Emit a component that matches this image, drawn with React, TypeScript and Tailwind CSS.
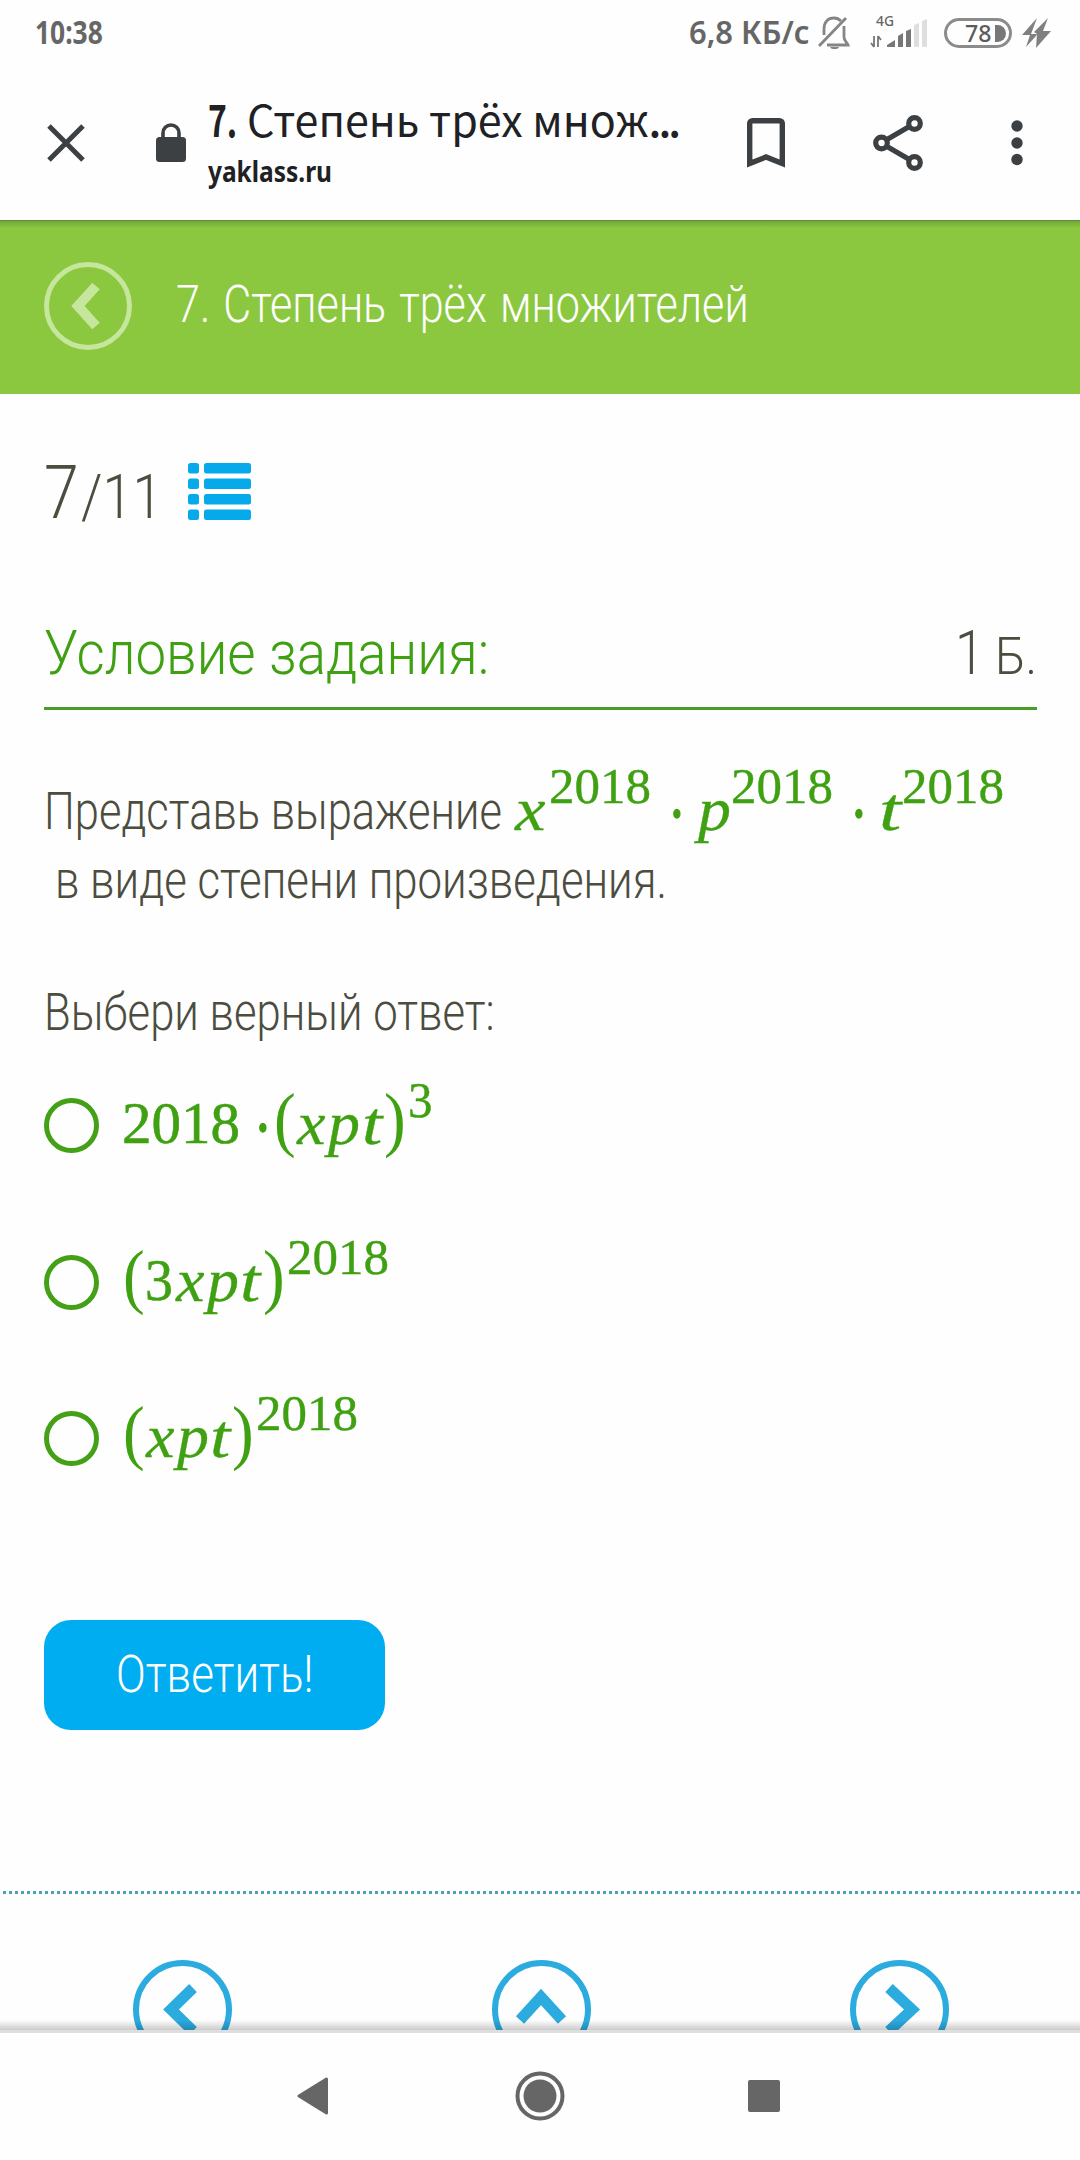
import React, { useLayoutEffect, useRef, useState } from 'react';

type Token = { text: string; kind: 'num' | 'var' | 'paren' | 'sup' | 'dot'; gap: number; width: number };

// [kind, text, gap before, width]
const tok = (kind: Token['kind'], text: string, gap: number, width: number): Token => ({ kind, text, gap, width });

const expression: Token[] = [
  tok('var', 'x', 13, 31),
  tok('sup', '2018', 3, 102),
  tok('dot', '·', 17, 18),
  tok('var', 'p', 12, 33),
  tok('sup', '2018', 0, 102),
  tok('dot', '·', 17, 18),
  tok('var', 't', 11, 22),
  tok('sup', '2018', 1, 102),
];

const answers: Token[][] = [
  [
    tok('num', '2018', 23, 118),
    tok('dot', '·', 14, 18),
    tok('paren', '(', 2, 22),
    tok('var', 'x', 1, 29),
    tok('var', 'p', 2, 32),
    tok('var', 't', 2, 20),
    tok('paren', ')', 2, 22),
    tok('sup', '3', 2, 25),
  ],
  [
    tok('paren', '(', 24, 22),
    tok('num', '3', 0, 28),
    tok('var', 'x', 3, 29),
    tok('var', 'p', 2, 32),
    tok('var', 't', 1, 20),
    tok('paren', ')', 3, 22),
    tok('sup', '2018', 2, 102),
  ],
  [
    tok('paren', '(', 24, 22),
    tok('var', 'x', 1, 29),
    tok('var', 'p', 2, 32),
    tok('var', 't', 1, 20),
    tok('paren', ')', 2, 22),
    tok('sup', '2018', 2, 102),
  ],
];

const mathStyles = {
  num: "text-[60px] [-webkit-text-stroke:0.6px_#3fa112] font-['Liberation_Serif',serif]",
  var: "text-[62px] translate-y-px italic [-webkit-text-stroke:0.3px_#3fa112] font-['Liberation_Serif',serif]",
  paren: "text-[71px] font-['Liberation_Serif',serif]",
  sup: "text-[51px] -translate-y-[26px] [-webkit-text-stroke:0.4px_#3fa112] font-['Liberation_Serif',serif]",
  dot: "text-[71px] translate-y-[9px] [-webkit-text-stroke:1.4px_#3fa112] font-['Liberation_Serif',serif]",
};

// One line of text squeezed to a given width
const Fit = ({ width, className = '', children }: { width: number; className?: string; children: React.ReactNode }) => {
  const ref = useRef<HTMLSpanElement>(null);
  const [scale, setScale] = useState(1);

  useLayoutEffect(() => {
    if (ref.current) {
      setScale(width / ref.current.offsetWidth);
    }
  }, [width]);

  return (
    <span className={`block shrink-0 whitespace-nowrap ${className}`} style={{ width }}>
      <span ref={ref} className="inline-block origin-left" style={{ transform: `scaleX(${scale})` }}>
        {children}
      </span>
    </span>
  );
};

const MathRow = ({ tokens }: { tokens: Token[] }) => (
  <div className="flex items-baseline text-[#3fa112]">
    {tokens.map((t, i) => (
      <div key={i} style={{ marginLeft: t.gap }}>
        <Fit width={t.width} className={`leading-[60px] ${mathStyles[t.kind]}`}>{t.text}</Fit>
      </div>
    ))}
  </div>
);

const StatusBar = () => (
  <div className="flex h-[66px] items-center pl-[35px] pr-[29px] text-[#666]">
    <Fit width={68} className="mb-[3px] font-['Noto_Sans'] text-[33px] font-bold leading-none">10:38</Fit>
    <Fit width={121} className="mb-[3px] ml-auto font-['Noto_Sans'] text-[33px] font-semibold leading-none">6,8 КБ/с</Fit>
    <svg className="ml-2" width="32" height="34" viewBox="0 0 32 34" fill="none" stroke="#858585" strokeWidth="2.8">
      <path d="M1 30 28 2" />
      <path d="M6 19v-6C6 6 10 2 16 2c3 0 5 1 7 3M26 10v11c0 4 3 5 4 8H9" />
      <path d="M12 31h9c-1 3-8 3-9 0z" fill="#858585" stroke="none" />
    </svg>
    <svg className="ml-5" width="58" height="50" viewBox="0 -8 58 50" fill="#777">
      <text x="6" y="10" fontSize="15" fontWeight="500" fontFamily="Noto Sans, sans-serif" textLength="18" lengthAdjust="spacingAndGlyphs" fill="#666">4G</text>
      <path d="M4 20v11M4 31l-3-4M8 31V20M8 20l3 4" stroke="#777" strokeWidth="1.8" fill="none" />
      <path d="M17 31v-2l8-5v7zM28 31V20l5-3v14zM36 31V15l5-2v18z" />
      <path d="M44 31V9l5-2v24zM52 31V5l5-2v28z" fill="#dedede" />
    </svg>
    <div className="ml-4 flex h-[30px] w-[68px] items-center rounded-full border-3 border-[#8b8b8b] pl-[18px]">
      <Fit width={26} className="mb-px font-['Noto_Sans'] text-[24px] font-medium leading-none text-[#5c5c5c]">78</Fit>
      <div className="ml-1 h-[17px] w-[11px] rounded-r-full bg-[#777]" />
    </div>
    <svg className="ml-2.5" width="29" height="30" viewBox="0 0 29 30" fill="#808080">
      <path d="M15 0 0 17h8L4 29l10-11 1-2H9zM26 0 12 14l3 2-1 14 15-17h-8z" />
    </svg>
  </div>
);

const BrowserBar = () => (
  <div className="flex h-[154px] items-center pl-[47px] text-[#202124]">
    <svg width="38" height="38" viewBox="0 0 38 38" stroke="#3c4043" strokeWidth="5">
      <path d="M2 2 36 36M36 2 2 36" />
    </svg>
    <svg className="ml-[71px]" width="30" height="40" viewBox="0 0 30 40">
      <path d="M7 15V10a8 8 0 0 1 16 0v5" fill="none" stroke="#3c4043" strokeWidth="3.6" />
      <rect y="14" width="30" height="25" rx="3.5" fill="#3c4043" />
    </svg>
    <div className="ml-[22px] flex h-[94px] w-[470px] flex-col gap-4">
      <div className="flex leading-none">
        <Fit width={29} className="font-['Noto_Sans_CJK_SC'] text-[44px] font-bold">7.</Fit>
        <Fit width={431} className="ml-[10px] font-['Noto_Sans_CJK_SC'] text-[44px] font-normal">
          Степень трёх множ<span className="font-medium tracking-[-3px]">...</span>
        </Fit>
      </div>
      <Fit width={124} className="font-['Noto_Sans'] text-[29px] font-bold leading-none">yaklass.ru</Fit>
    </div>
    <svg className="ml-[69px]" width="38" height="50" viewBox="0 0 38 50" fill="none" stroke="#3c4043" strokeWidth="5.4">
      <path d="M2.7 45.5V5.5a2.8 2.8 0 0 1 2.8-2.8h27a2.8 2.8 0 0 1 2.8 2.8v40L19 39z" />
    </svg>
    <svg className="ml-[88px]" width="50" height="56" viewBox="0 0 50 56" fill="none" stroke="#3c4043" strokeWidth="5.2">
      <path d="M8 28 41.500 8.500M8 28l33.500 19.500" />
      <circle cx="8.500" cy="28" r="5.800" fill="#fff" />
      <circle cx="41.500" cy="8.500" r="5.800" fill="#fff" />
      <circle cx="41.500" cy="47.500" r="5.800" fill="#fff" />
    </svg>
    <svg className="ml-[88px]" width="12" height="46" viewBox="0 0 12 46" fill="#3c4043">
      <circle cx="6" cy="6" r="5.700" />
      <circle cx="6" cy="23" r="5.700" />
      <circle cx="6" cy="39.500" r="5.700" />
    </svg>
  </div>
);

const App = () => {
  return (
    <div className="h-[2160px] w-[1080px] overflow-hidden bg-[#fefefe] font-['Roboto',sans-serif] font-light text-[#4c4c3f]">
      <StatusBar />
      <BrowserBar />

      {/* Page header */}
      <header className="h-[174px] bg-[#8bc83f]">
        <div className="h-2 border-t border-[#5f8a3b] bg-linear-to-b from-[#71a737] to-[#8bc83f]" />
        <div className="flex pl-11 pt-[34px]">
          <svg width="88" height="88" viewBox="0 0 88 88" fill="none" stroke="#c5e69c">
            <circle cx="44" cy="44" r="41.500" strokeWidth="5" />
            <path d="M52 24 34 44l18 20" strokeWidth="10" />
          </svg>
          <Fit width={573} className="ml-11 mt-[17px] text-[51px] leading-none text-white [word-spacing:3px]">7. Степень трёх множителей</Fit>
        </div>
      </header>

      <main className="relative h-[1636px] overflow-hidden">
        <div className="px-11 pt-[61px]">
          <div className="flex h-[75px] items-start">
            <div className="flex items-baseline leading-none">
              <Fit width={35} className="text-[75px]">7</Fit>
              <Fit width={81} className="ml-[2px] text-[62px]">/11</Fit>
            </div>
            <svg className="ml-[26px] mt-2" width="63" height="58" viewBox="0 0 63 58" fill="#06aaea">
              {[0, 15.5, 31, 46.5].map((y) => (
                <g key={y}>
                  <rect y={y} width="11" height="10.500" rx="2.500" />
                  <rect x="16" y={y} width="47" height="10.500" rx="2.500" />
                </g>
              ))}
            </svg>
          </div>

          <div className="mt-[92px] flex h-[88px] w-[993px] items-baseline justify-between border-b-3 border-[#4a9d26] leading-none">
            <Fit width={445} className="text-[62px] text-[#3fa112]">Условие задания:</Fit>
            <div className="flex items-baseline">
              <Fit width={29} className="text-[62px]">1</Fit>
              <Fit width={42} className="ml-[11px] text-[52px]">Б.</Fit>
            </div>
          </div>

          <div className="mt-[65px] flex h-[70px] items-baseline">
            <Fit width={458} className="text-[51px] leading-none">Представь выражение</Fit>
            <MathRow tokens={expression} />
          </div>
          <Fit width={612} className="ml-[11px] mt-[10px] text-[51px] leading-none">в виде степени произведения.</Fit>

          <Fit width={451} className="mt-[81px] text-[51px] leading-none">Выбери верный ответ:</Fit>
          <div className="mt-[51px]">
            {answers.map((tokens, i) => (
              <div key={i} className="flex h-[156.5px] items-start">
                <div className="mt-[9px] size-[55px] shrink-0 rounded-full border-[5.5px] border-[#43a017]" />
                <MathRow tokens={tokens} />
              </div>
            ))}
          </div>

          <button className="mt-[61px] flex h-[110px] w-[341px] items-start rounded-[27px] bg-[#00adf0] pl-[72px] pt-[29px] text-white">
            <Fit width={197} className="text-left text-[51px] leading-none">Ответить!</Fit>
          </button>
        </div>

        <svg className="mt-[161px] block" width="1080" height="3">
          <path d="M3 1.500H1080" stroke="#4da3ad" strokeWidth="3" strokeDasharray="3 3" />
        </svg>

        {/* Prev / up / next */}
        <div className="mt-[66px] flex justify-between pl-[133px] pr-[131px]">
          {['M60 28 38 49.500l22 21.500', 'M28 60 49 37 70 60', 'M39 28l23 21.500L39 71'].map((d) => (
            <svg key={d} width="99" height="99" viewBox="0 0 99 99" fill="none" stroke="#2cabdf">
              <circle cx="49.500" cy="49.500" r="46.500" strokeWidth="6" />
              <path d={d} strokeWidth="11" />
            </svg>
          ))}
        </div>
        <div className="absolute inset-x-0 bottom-0 h-[10px] bg-linear-to-b from-black/0 to-black/20" />
      </main>

      {/* Android navigation */}
      <div className="h-[3px] bg-[#dedede]" />
      <nav className="flex items-center pl-[297px] pt-[38px]">
        <svg width="31" height="38" viewBox="0 0 31 38" fill="#666" stroke="#666" strokeWidth="3" strokeLinejoin="round">
          <path d="M2 19 29.500 2v34z" />
        </svg>
        <svg className="ml-[187px]" width="50" height="50" viewBox="0 0 50 50">
          <circle cx="25" cy="25" r="22.500" fill="none" stroke="#666" strokeWidth="4" />
          <circle cx="25" cy="25" r="16.500" fill="#666" />
        </svg>
        <div className="ml-[183px] size-8 rounded-xs bg-[#666]" />
      </nav>
    </div>
  );
};

export default App;
